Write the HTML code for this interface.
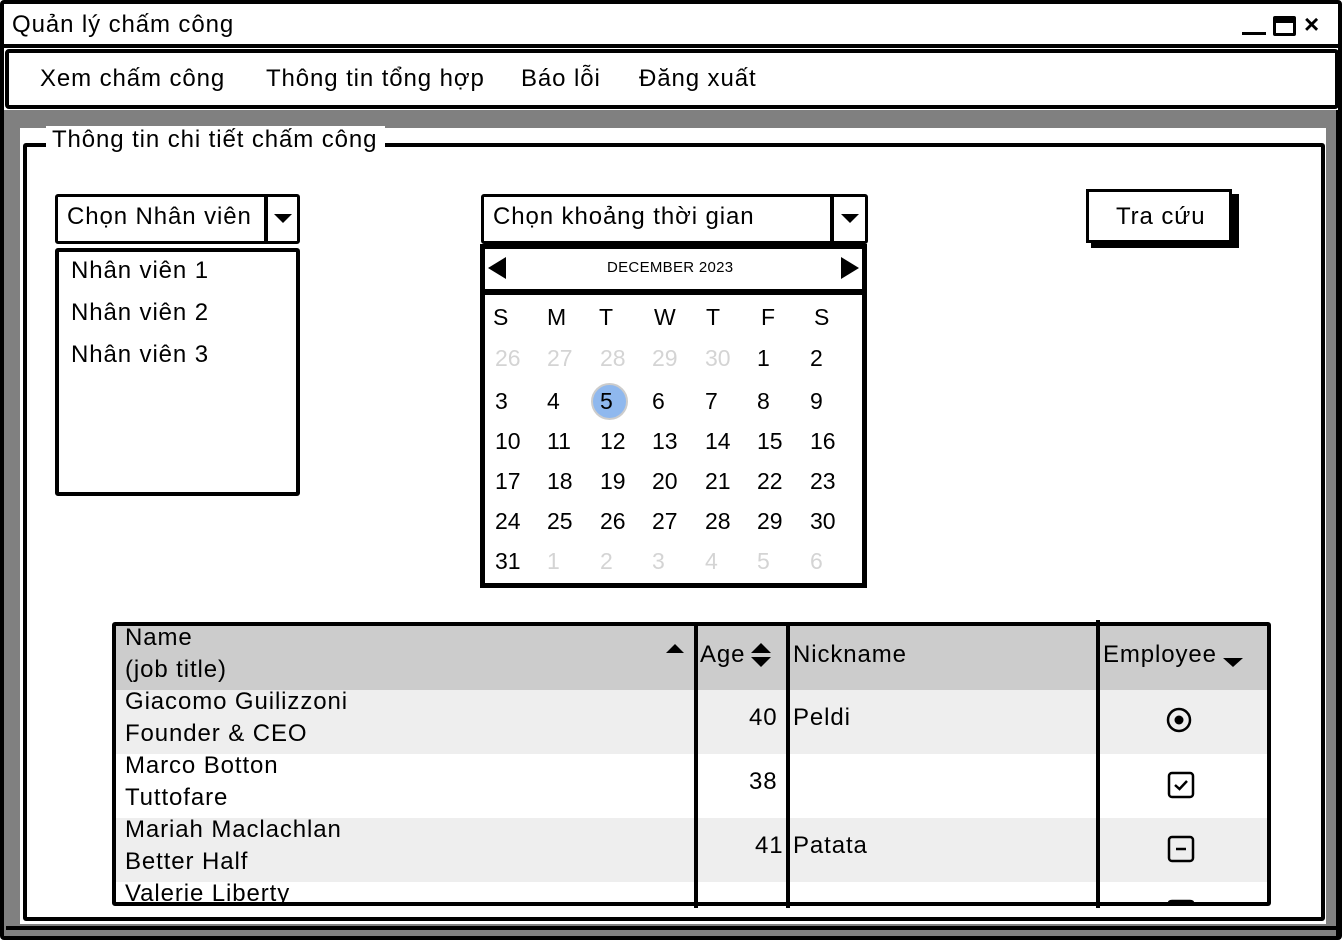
<!DOCTYPE html>
<html><head><meta charset="utf-8"><style>
*{margin:0;padding:0;box-sizing:border-box}
body{width:1342px;height:940px;position:relative;background:#fff;font-family:"Liberation Sans","DejaVu Sans",sans-serif;color:#000;overflow:hidden}
.a{position:absolute}
.t{position:absolute;white-space:nowrap;font-size:24px;line-height:28px;letter-spacing:0.9px}
.c{position:absolute;font-size:23px;line-height:26px;white-space:nowrap}
.g{color:#d4d4d4}
</style></head><body>
<div class="a" style="left:0;top:0;width:1342px;height:940px;border:4px solid #000;border-radius:4px;background:#fff"></div>
<div class="a" style="left:2px;top:44px;width:1338px;height:4px;background:#000"></div>
<div class="t" style="left:12px;top:11px">Quản lý chấm công</div>
<div class="a" style="left:1242px;top:32px;width:24px;height:3px;background:#000"></div>
<div class="a" style="left:1273px;top:16px;width:23px;height:20px;border:3px solid #000;border-top-width:7px;border-radius:2px"></div>
<div class="t" style="left:1304px;top:10px;font-size:26px;font-weight:bold">×</div>
<div class="a" style="left:5px;top:49px;width:1334px;height:60px;border:4px solid #000;border-radius:4px;background:#fff"></div>
<div class="t" style="left:40px;top:65px">Xem chấm công</div>
<div class="t" style="left:266px;top:65px">Thông tin tổng hợp</div>
<div class="t" style="left:521px;top:65px">Báo lỗi</div>
<div class="t" style="left:639px;top:65px">Đăng xuất</div>
<div class="a" style="left:4px;top:110px;width:1334px;height:826px;background:#808080"></div>
<div class="a" style="left:6px;top:926px;width:1332px;height:4px;background:#000"></div>
<div class="a" style="left:1336px;top:110px;width:3px;height:826px;background:#000"></div>
<div class="a" style="left:20px;top:128px;width:1306px;height:796px;background:#fff"></div>
<div class="a" style="left:23px;top:143px;width:1302px;height:778px;border:4px solid #000;border-radius:3px"></div>
<div class="t" style="left:46px;top:126px;background:#fff;padding:0 8px 0 6px">Thông tin chi tiết chấm công</div>
<div class="a" style="left:55px;top:194px;width:245px;height:50px;border:3px solid #000;border-radius:3px;background:#fff"></div>
<div class="a" style="left:264px;top:194px;width:4px;height:50px;background:#000"></div>
<div class="a" style="left:274px;top:214px;width:0;height:0;border-left:9px solid transparent;border-right:9px solid transparent;border-top:9px solid #000"></div>
<div class="t" style="left:67px;top:203px">Chọn Nhân viên</div>
<div class="a" style="left:55px;top:248px;width:245px;height:248px;border:4px solid #000;border-radius:3px"></div>
<div class="t" style="left:71px;top:257px">Nhân viên 1</div>
<div class="t" style="left:71px;top:299px">Nhân viên 2</div>
<div class="t" style="left:71px;top:341px">Nhân viên 3</div>
<div class="a" style="left:481px;top:194px;width:387px;height:50px;border:3px solid #000;border-radius:3px;background:#fff"></div>
<div class="a" style="left:830px;top:194px;width:4px;height:50px;background:#000"></div>
<div class="a" style="left:841px;top:214px;width:0;height:0;border-left:9px solid transparent;border-right:9px solid transparent;border-top:9px solid #000"></div>
<div class="t" style="left:493px;top:203px">Chọn khoảng thời gian</div>
<div class="a" style="left:480px;top:244px;width:387px;height:344px;border:5px solid #000;background:#fff"></div>
<div class="a" style="left:480px;top:289px;width:387px;height:6px;background:#000"></div>
<div class="a" style="left:488px;top:257px;width:0;height:0;border-top:11px solid transparent;border-bottom:11px solid transparent;border-right:18px solid #000"></div>
<div class="a" style="left:841px;top:257px;width:0;height:0;border-top:11px solid transparent;border-bottom:11px solid transparent;border-left:18px solid #000"></div>
<div class="t" style="left:607px;top:254px;font-size:15px;letter-spacing:0.3px">DECEMBER 2023</div>
<div class="a" style="left:591px;top:383px;width:37px;height:37px;border-radius:50%;background:#8fb8ee;border:2px solid #ccc"></div>
<div class="c" style="left:493px;top:304px">S</div><div class="c" style="left:547px;top:304px">M</div><div class="c" style="left:599px;top:304px">T</div><div class="c" style="left:654px;top:304px">W</div><div class="c" style="left:706px;top:304px">T</div><div class="c" style="left:761px;top:304px">F</div><div class="c" style="left:814px;top:304px">S</div>
<div class="c g" style="left:495px;top:345px">26</div><div class="c g" style="left:547px;top:345px">27</div><div class="c g" style="left:600px;top:345px">28</div><div class="c g" style="left:652px;top:345px">29</div><div class="c g" style="left:705px;top:345px">30</div><div class="c" style="left:757px;top:345px">1</div><div class="c" style="left:810px;top:345px">2</div>
<div class="c" style="left:495px;top:388px">3</div><div class="c" style="left:547px;top:388px">4</div><div class="c" style="left:600px;top:388px">5</div><div class="c" style="left:652px;top:388px">6</div><div class="c" style="left:705px;top:388px">7</div><div class="c" style="left:757px;top:388px">8</div><div class="c" style="left:810px;top:388px">9</div>
<div class="c" style="left:495px;top:428px">10</div><div class="c" style="left:547px;top:428px">11</div><div class="c" style="left:600px;top:428px">12</div><div class="c" style="left:652px;top:428px">13</div><div class="c" style="left:705px;top:428px">14</div><div class="c" style="left:757px;top:428px">15</div><div class="c" style="left:810px;top:428px">16</div>
<div class="c" style="left:495px;top:468px">17</div><div class="c" style="left:547px;top:468px">18</div><div class="c" style="left:600px;top:468px">19</div><div class="c" style="left:652px;top:468px">20</div><div class="c" style="left:705px;top:468px">21</div><div class="c" style="left:757px;top:468px">22</div><div class="c" style="left:810px;top:468px">23</div>
<div class="c" style="left:495px;top:508px">24</div><div class="c" style="left:547px;top:508px">25</div><div class="c" style="left:600px;top:508px">26</div><div class="c" style="left:652px;top:508px">27</div><div class="c" style="left:705px;top:508px">28</div><div class="c" style="left:757px;top:508px">29</div><div class="c" style="left:810px;top:508px">30</div>
<div class="c" style="left:495px;top:548px">31</div><div class="c g" style="left:547px;top:548px">1</div><div class="c g" style="left:600px;top:548px">2</div><div class="c g" style="left:652px;top:548px">3</div><div class="c g" style="left:705px;top:548px">4</div><div class="c g" style="left:757px;top:548px">5</div><div class="c g" style="left:810px;top:548px">6</div>
<div class="a" style="left:1091px;top:194px;width:148px;height:54px;background:#000"></div>
<div class="a" style="left:1086px;top:189px;width:146px;height:54px;border:3px solid #000;background:#fff"></div>
<div class="t" style="left:1116px;top:203px">Tra cứu</div>
<div class="a" style="left:112px;top:622px;width:1159px;height:284px;border:4px solid #000;border-radius:3px;background:#fff;overflow:hidden">
 <div class="a" style="left:0;top:0;width:1155px;height:64px;background:#ccc"></div>
 <div class="a" style="left:0;top:64px;width:1155px;height:64px;background:#eee"></div>
 <div class="a" style="left:0;top:192px;width:1155px;height:64px;background:#eee"></div>
</div>
<div class="a" style="left:694px;top:622px;width:4px;height:286px;background:#000"></div>
<div class="a" style="left:786px;top:622px;width:4px;height:286px;background:#000"></div>
<div class="a" style="left:1096px;top:620px;width:4px;height:288px;background:#000"></div>
<div class="t" style="left:125px;top:624px">Name</div>
<div class="t" style="left:125px;top:656px">(job title)</div>
<div class="a" style="left:666px;top:644px;width:0;height:0;border-left:9px solid transparent;border-right:9px solid transparent;border-bottom:9px solid #000"></div>
<div class="t" style="left:700px;top:641px">Age</div>
<div class="a" style="left:751px;top:643px;width:0;height:0;border-left:10px solid transparent;border-right:10px solid transparent;border-bottom:10px solid #000"></div>
<div class="a" style="left:751px;top:657px;width:0;height:0;border-left:10px solid transparent;border-right:10px solid transparent;border-top:10px solid #000"></div>
<div class="t" style="left:793px;top:641px">Nickname</div>
<div class="t" style="left:1103px;top:641px">Employee</div>
<div class="a" style="left:1223px;top:658px;width:0;height:0;border-left:10px solid transparent;border-right:10px solid transparent;border-top:9px solid #000"></div>
<div class="t" style="left:125px;top:688px">Giacomo Guilizzoni</div>
<div class="t" style="left:125px;top:720px">Founder &amp; CEO</div>
<div class="t" style="left:749px;top:704px">40</div>
<div class="t" style="left:793px;top:704px">Peldi</div>
<div class="t" style="left:125px;top:752px">Marco Botton</div>
<div class="t" style="left:125px;top:784px">Tuttofare</div>
<div class="t" style="left:749px;top:768px">38</div>
<div class="t" style="left:125px;top:816px">Mariah Maclachlan</div>
<div class="t" style="left:125px;top:848px">Better Half</div>
<div class="t" style="left:755px;top:832px">41</div>
<div class="t" style="left:793px;top:832px">Patata</div>
<div class="t" style="left:125px;top:880px;height:22px;overflow:hidden">Valerie Liberty</div>
<svg class="a" style="left:1160px;top:700px" width="40" height="210" viewBox="0 0 40 210">
 <circle cx="19" cy="20" r="11" fill="none" stroke="#000" stroke-width="2.5"/>
 <circle cx="19" cy="20" r="4.5" fill="#000"/>
 <rect x="9" y="73" width="24" height="24" rx="3" fill="none" stroke="#000" stroke-width="2.5"/>
 <path d="M15 85 L19.5 89 L27 81" fill="none" stroke="#000" stroke-width="2.5"/>
 <rect x="9" y="137" width="24" height="24" rx="3" fill="none" stroke="#000" stroke-width="2.5"/>
 <path d="M16 149 H26" stroke="#000" stroke-width="2.5"/>
 <path d="M9 205 V203 Q9 201 12 201 H30 Q33 201 33 203 V205" fill="none" stroke="#000" stroke-width="2.5"/>
</svg>
</body></html>
